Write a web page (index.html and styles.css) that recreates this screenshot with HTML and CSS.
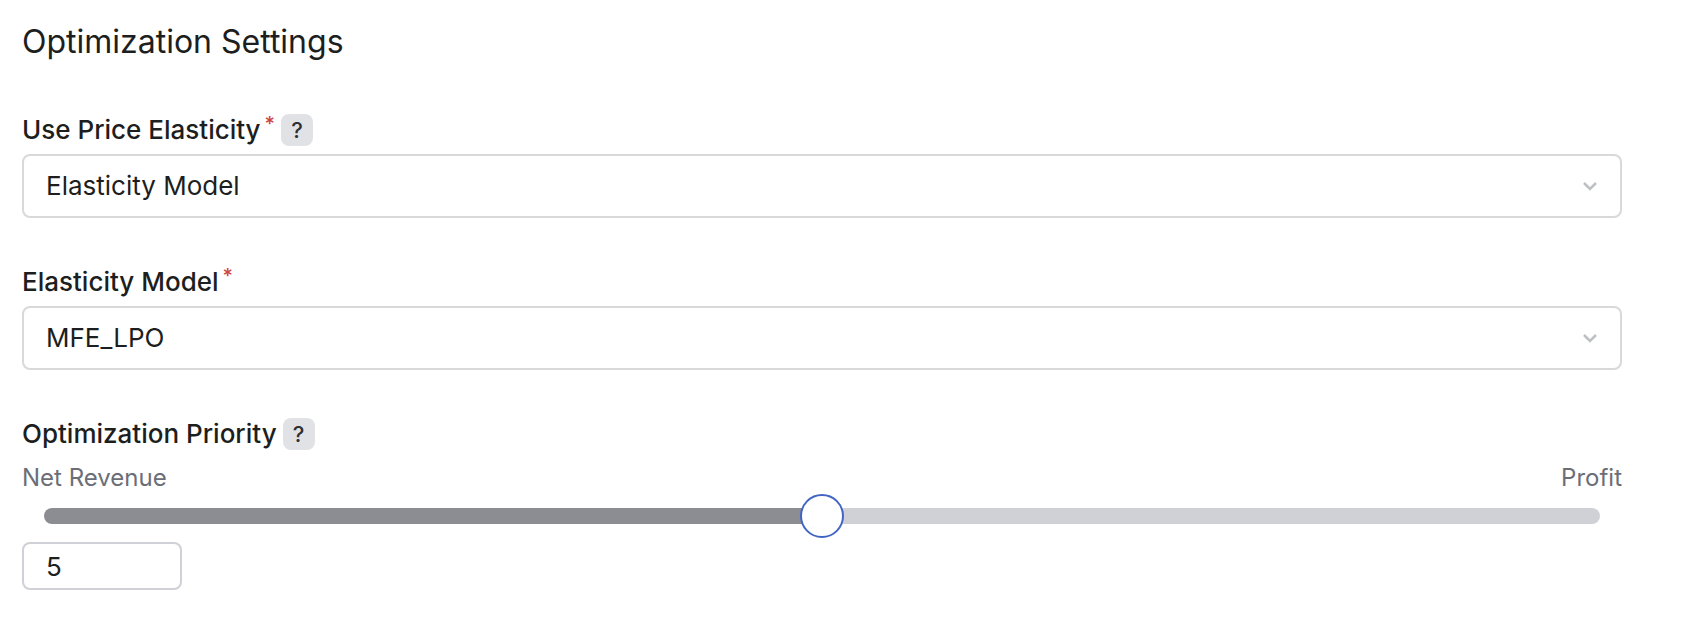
FILE: index.html
```html
<!DOCTYPE html>
<html lang="en">
<head>
<meta charset="utf-8">
<title>Optimization Settings</title>
<link rel="stylesheet" href="styles.css">
</head>
<body>
<form class="settings">
  <h1 class="title">Optimization Settings</h1>

  <div class="field">
    <div class="label-row">
      <label class="label" for="use-elasticity">Use Price Elasticity</label>
      <span class="required">*</span>
      <button class="help" type="button">?</button>
    </div>
    <div class="select-box">
      <select class="select" id="use-elasticity" required>
        <option>Elasticity Model</option>
      </select>
      <svg class="chevron" viewBox="0 0 16 10" aria-hidden="true"><path d="M2 2l6 6 6-6"/></svg>
    </div>
  </div>

  <div class="field">
    <div class="label-row">
      <label class="label" for="model">Elasticity Model</label>
      <span class="required">*</span>
    </div>
    <div class="select-box">
      <select class="select" id="model" required>
        <option>MFE_LPO</option>
      </select>
      <svg class="chevron" viewBox="0 0 16 10" aria-hidden="true"><path d="M2 2l6 6 6-6"/></svg>
    </div>
  </div>

  <div class="field">
    <div class="label-row">
      <label class="label" for="priority">Optimization Priority</label>
      <button class="help" type="button">?</button>
    </div>
    <div class="slider-group">
      <div class="ends"><span>Net Revenue</span><span>Profit</span></div>
      <input class="slider" id="priority" type="range" min="0" max="10" value="5">
      <input class="number" type="text" inputmode="numeric" value="5" aria-label="Optimization Priority value">
    </div>
  </div>
</form>
</body>
</html>
```

FILE: styles.css
```css
* {
  box-sizing: border-box;
}

body {
  margin: 0;
  background: #fff;
  color: #1d1e20;
  font-family: Inter, "Liberation Sans", sans-serif;
  font-size: 26px;
  line-height: 32px;
}

.settings {
  display: flex;
  flex-direction: column;
  gap: 48px;
  padding: 22px 66px 44px 22px;
}

.title {
  margin: 0;
  padding-bottom: 4px;
  font-size: 32px;
  font-weight: 400;
  line-height: 40px;
}

.field {
  display: flex;
  flex-direction: column;
  gap: 8px;
}

.label-row {
  display: flex;
  align-items: center;
  height: 32px;
}

.label {
  font-weight: 500;
}

.required {
  align-self: flex-start;
  margin-left: 4px;
  color: #d0453e;
  font-size: 20px;
  font-weight: 500;
  line-height: 20px;
}

.help {
  width: 32px;
  height: 32px;
  margin-left: 6px;
  padding: 0;
  border: 0;
  border-radius: 8px;
  background: #e1e2e6;
  color: #2f3033;
  font: 500 22px/32px Inter, sans-serif;
}

.select-box {
  display: grid;
  align-items: center;
}

.select,
.chevron {
  grid-area: 1 / 1;
}

.select {
  appearance: none;
  width: 100%;
  height: 64px;
  padding: 0 56px 0 22px;
  border: 2px solid #d9d9d9;
  border-radius: 8px;
  background: #fff;
  color: inherit;
  font: inherit;
}

.chevron {
  justify-self: end;
  width: 16px;
  height: 10px;
  margin-right: 24px;
  fill: none;
  stroke: #bfc0c3;
  stroke-width: 2.5;
  pointer-events: none;
}

.slider-group {
  display: flex;
  flex-direction: column;
  padding-top: 4px;
}

.ends {
  display: flex;
  justify-content: space-between;
  color: #6b6e76;
  font-size: 24px;
}

.slider {
  appearance: none;
  height: 44px;
  margin: 0 22px;
  background: transparent;
}

.slider::-webkit-slider-runnable-track {
  height: 16px;
  border-radius: 8px;
  background: linear-gradient(to right, #8c8d92 50%, #d0d1d6 50%);
}

.slider::-webkit-slider-thumb {
  appearance: none;
  width: 44px;
  height: 44px;
  margin-top: -14px;
  border: 2px solid #4265c4;
  border-radius: 50%;
  background: #fff;
}

.number {
  width: 160px;
  height: 48px;
  margin-top: 4px;
  padding: 0 22px;
  border: 2px solid #d0d1d6;
  border-radius: 8px;
  background: #fff;
  color: inherit;
  font: inherit;
}
```
